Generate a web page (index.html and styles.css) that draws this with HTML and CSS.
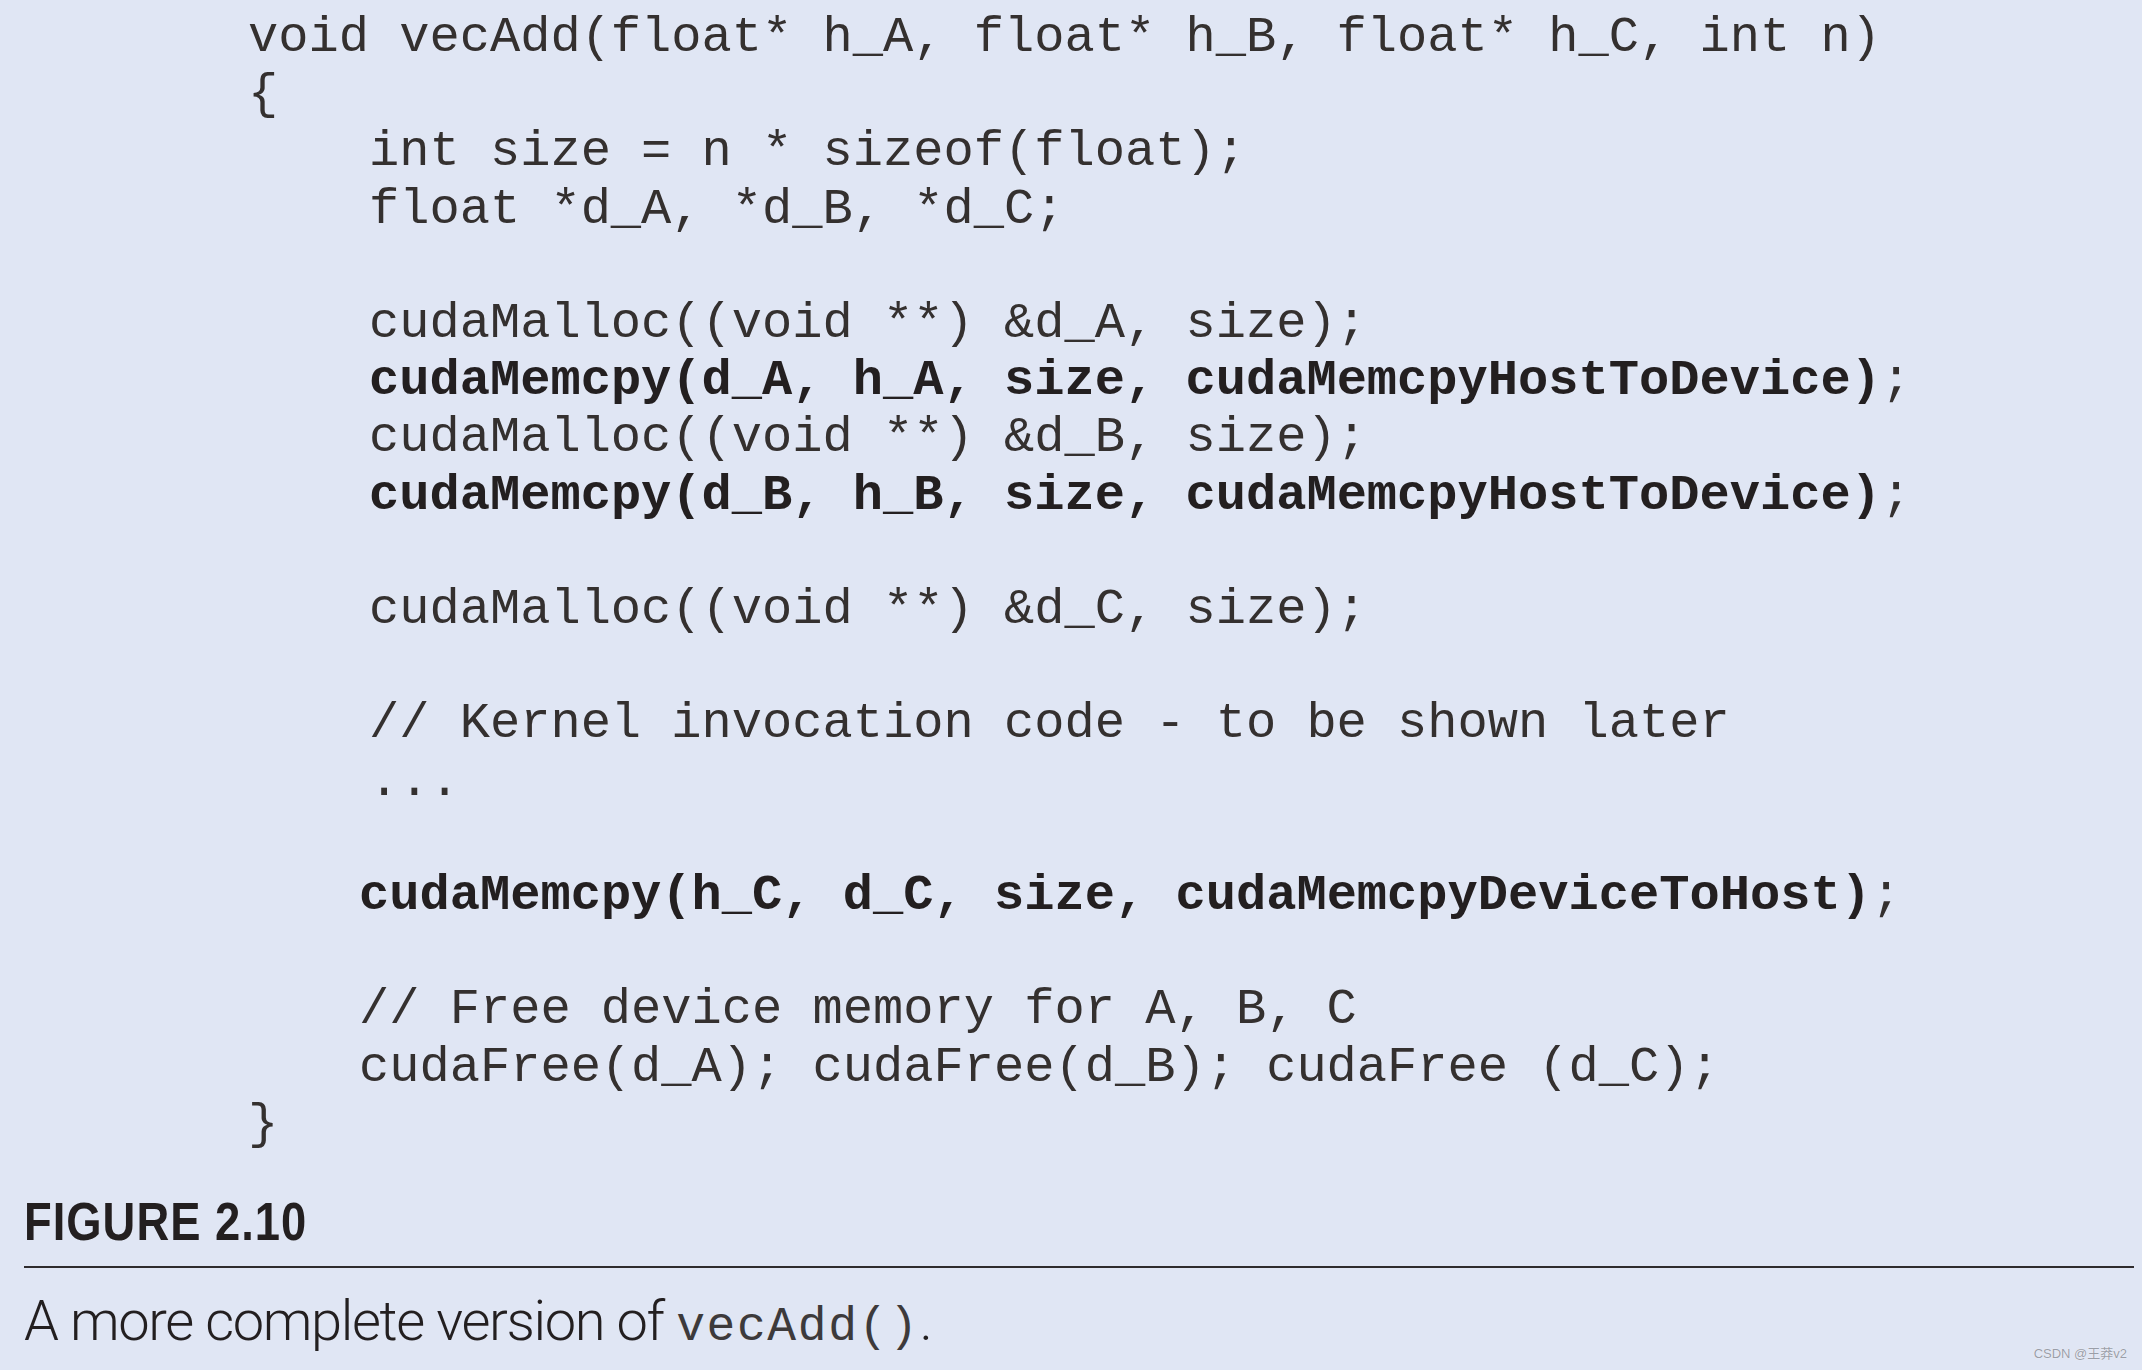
FILE: index.html
```html
<!DOCTYPE html>
<html lang="en">
<head>
<meta charset="utf-8">
<title>Figure 2.10</title>
<link rel="stylesheet" href="styles.css">
</head>
<body>
<div class="page">
<pre class="code"><span class="ln">void vecAdd(float* h_A, float* h_B, float* h_C, int n)</span>
<span class="ln">{</span>
<span class="ln">    int size = n * sizeof(float);</span>
<span class="ln">    float *d_A, *d_B, *d_C;</span>

<span class="ln">    cudaMalloc((void **) &amp;d_A, size);</span>
<span class="ln">    <b>cudaMemcpy(d_A, h_A, size, cudaMemcpyHostToDevice)</b>;</span>
<span class="ln">    cudaMalloc((void **) &amp;d_B, size);</span>
<span class="ln">    <b>cudaMemcpy(d_B, h_B, size, cudaMemcpyHostToDevice)</b>;</span>

<span class="ln">    cudaMalloc((void **) &amp;d_C, size);</span>

<span class="ln">    // Kernel invocation code - to be shown later</span>
<span class="ln">    ...</span>

<span class="ln shift">    <b>cudaMemcpy(h_C, d_C, size, cudaMemcpyDeviceToHost)</b>;</span>

<span class="ln shift">    // Free device memory for A, B, C</span>
<span class="ln shift">    cudaFree(d_A); cudaFree(d_B); cudaFree (d_C);</span>
<span class="ln">}</span></pre>
<div class="fig-label">FIGURE 2.10</div>
<div class="rule"></div>
<p class="caption">A more complete version of <code class="inline">vecAdd()</code>.</p>
</div>
<div class="watermark">CSDN @王莽v2</div>
</body>
</html>
```
FILE: styles.css
```css
html, body {
  margin: 0;
  padding: 0;
}
body {
  background: #e0e6f4;
  width: 2142px;
  height: 1370px;
  overflow: hidden;
  position: relative;
}
.page {
  display: flex;
  flex-direction: column;
  align-items: stretch;
  padding: 9px 8px 0 24px;
}
.code {
  margin: 0 0 0 224px;
  font-family: "Liberation Mono", "Courier New", monospace;
  font-size: 50.4px;
  line-height: 57.2px;
  color: #34302f;
  white-space: pre;
}
.code b {
  font-weight: 700;
  color: #231f20;
}
.ln.shift {
  margin-left: -10px;
}
.fig-label {
  margin-top: 42px;
  font-family: "Liberation Sans", sans-serif;
  font-weight: 700;
  font-size: 54px;
  line-height: 53px;
  letter-spacing: 1.2px;
  color: #231f20;
  transform: scaleX(0.84);
  transform-origin: left center;
}
.rule {
  margin-top: 18px;
  height: 0;
  border-top: 2px solid #2f2c2e;
}
.caption {
  margin: 25px 0 0 0;
  font-family: Roboto, "Liberation Sans", sans-serif;
  font-weight: 300;
  font-size: 56px;
  line-height: 56px;
  letter-spacing: -1.35px;
  color: #231f20;
}
.inline {
  font-family: "Liberation Mono", monospace;
  font-size: 48px;
  letter-spacing: 1.6px;
  color: #3d3a3b;
}
.watermark {
  position: absolute;
  right: 15px;
  bottom: 8px;
  font-family: "Liberation Sans", "Noto Sans CJK SC", sans-serif;
  font-size: 13px;
  line-height: 16px;
  color: #9a9ea8;
  text-shadow: 0 0 1px #ffffff;
}
```
